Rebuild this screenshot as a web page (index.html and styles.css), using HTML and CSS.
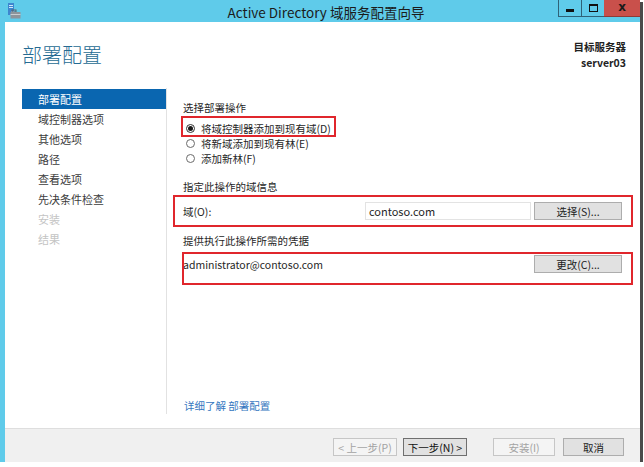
FILE: index.html
```html
<!DOCTYPE html>
<html lang="zh-CN">

<head>
  <meta charset="UTF-8" />
  <title>Active Directory 域服务配置向导</title>
  <link rel="stylesheet" href="styles.css">
</head>

<body>
  <div class="window">
    <div class="titlebar">
      <svg class="app-icon" width="14" height="16" viewBox="0 0 14 16">
        <rect x="1" y="0" width="6" height="12" fill="#3d86cf" />
        <rect x="2" y="2" width="4" height="1" fill="#cfe6fa" />
        <rect x="2" y="4" width="4" height="1" fill="#cfe6fa" />
        <rect x="4" y="8" width="3" height="1" fill="#9fd0f5" />
        <rect x="5" y="7" width="4" height="2" fill="none" stroke="#5b636b" stroke-width="1" />
        <rect x="3.5" y="9" width="10" height="6.5" fill="#8d949b" />
        <rect x="3.5" y="11" width="10" height="1" fill="#c9cdd1" />
      </svg>
      <div class="title">Active Directory 域服务配置向导</div>
      <div class="controls">
        <span class="ctl ctl-min"><i></i></span>
        <span class="ctl ctl-max"><i></i></span>
        <span class="ctl ctl-close">x</span>
      </div>
    </div>

    <div class="client">
      <div class="page">
        <div class="page-head">
          <h1>部署配置</h1>
          <div class="target">
            <div>目标服务器</div>
            <div class="target-name">server03</div>
          </div>
        </div>

        <div class="page-body">
          <ul class="steps">
            <li class="active">部署配置</li>
            <li>域控制器选项</li>
            <li>其他选项</li>
            <li>路径</li>
            <li>查看选项</li>
            <li>先决条件检查</li>
            <li class="disabled">安装</li>
            <li class="disabled">结果</li>
          </ul>

          <div class="pane">
            <div class="group-label first">选择部署操作</div>
            <div class="radios">
              <div class="radio mark mark-radio"><span class="dot checked"></span>将域控制器添加到现有域(D)</div>
              <div class="radio"><span class="dot"></span>将新域添加到现有林(E)</div>
              <div class="radio"><span class="dot"></span>添加新林(F)</div>
            </div>

            <div class="group-label">指定此操作的域信息</div>
            <div class="field-row domain-row mark mark-domain">
              <span class="field-name">域(O):</span>
              <span class="text-box">contoso.com</span>
              <span class="btn">选择(S)...</span>
            </div>

            <div class="group-label">提供执行此操作所需的凭据</div>
            <div class="field-row cred-row mark mark-cred">
              <span class="field-name">administrator@contoso.com</span>
              <span class="btn">更改(C)...</span>
            </div>

            <a class="more-link" href="#">详细了解 部署配置</a>
          </div>
        </div>
      </div>

      <div class="footer">
        <span class="btn foot-btn is-disabled">&lt; 上一步(P)</span>
        <span class="btn foot-btn is-default">下一步(N) &gt;</span>
        <span class="btn foot-btn is-disabled install">安装(I)</span>
        <span class="btn foot-btn cancel">取消</span>
      </div>
    </div>
  </div>
</body>

</html>
```

FILE: styles.css
```css
* {
  box-sizing: border-box;
}

html,
body {
  margin: 0;
  padding: 0;
  background: #fff;
  font-family: "Noto Sans CJK SC", "Noto Sans", sans-serif;
  color: #262626;
}

.window {
  width: 640px;
  height: 462px;
  display: flex;
  flex-direction: column;
  background: #5fcbea;
  box-shadow: 3px 2px 0 #4a4a4a;
}

/* title bar */

.titlebar {
  height: 22px;
  display: grid;
  grid-template-columns: 1fr auto 1fr;
  align-items: center;
  flex-shrink: 0;
}

.app-icon {
  margin-left: 7px;
  align-self: start;
  margin-top: 3px;
}

.title {
  font-size: 13.5px;
  line-height: 22px;
  color: #1b1b1b;
  padding: 1px 0 0 12px;
}

.controls {
  justify-self: end;
  align-self: start;
  display: flex;
  height: 17px;
}

.ctl {
  display: flex;
  align-items: center;
  justify-content: center;
  height: 17px;
  border-bottom: 1px solid #2f6277;
}

.ctl-min {
  width: 24px;
  border-left: 1px solid #2f6277;
  border-right: 1px solid #2f6277;
}

.ctl-min i {
  display: block;
  width: 8px;
  height: 3px;
  background: #111;
  margin-top: 5px;
}

.ctl-max {
  width: 22px;
}

.ctl-max i {
  display: block;
  width: 9px;
  height: 8px;
  border: 1px solid #111;
  border-top-width: 2px;
}

.ctl-close {
  width: 36px;
  background: #c9504b;
  border-bottom-color: #8e3a36;
  font-size: 12px;
  font-weight: bold;
  color: #1a1a1a;
  font-family: "DejaVu Sans", sans-serif;
  line-height: 1;
  padding-bottom: 2px;
}

/* client area */

.client {
  flex: 1;
  display: flex;
  flex-direction: column;
  margin-left: 5px;
  background: #fff;
}

.page {
  flex: 1;
  display: flex;
  flex-direction: column;
}

.page-head {
  display: flex;
  justify-content: space-between;
  align-items: flex-start;
  padding: 17px 14px 0 17px;
}

h1 {
  margin: 3px 0 0;
  font-size: 20px;
  line-height: 26px;
  font-weight: 300;
  color: #256b93;
}

.target {
  text-align: right;
  font-size: 10.5px;
  line-height: 15.5px;
  font-weight: bold;
  color: #222;
}

.page-body {
  flex: 1;
  display: flex;
  margin: 18px 0 14px 17px;
}

.steps {
  list-style: none;
  margin: 0;
  padding: 1px 0 0;
  width: 145px;
  border-right: 1px solid #e2e2e2;
  font-size: 11px;
}

.steps li {
  height: 20px;
  line-height: 20px;
  padding-left: 16px;
  color: #3c3c3c;
}

.steps li.active {
  background: #0a66b0;
  color: #fff;
}

.steps li.disabled {
  color: #c4c4c4;
}

.pane {
  flex: 1;
  display: flex;
  flex-direction: column;
  padding: 0 18px 0 16px;
  font-size: 10.5px;
}

.group-label {
  line-height: 16px;
  margin-top: 13px;
  color: #262626;
}

.group-label.first {
  margin-top: 12px;
}

.radios {
  margin-top: 5px;
}

.radio {
  display: flex;
  align-items: center;
  height: 15px;
  width: fit-content;
}

.dot {
  width: 9px;
  height: 9px;
  border: 1px solid #6b6b6b;
  border-radius: 50%;
  margin: 0 6px 0 3px;
  display: flex;
  align-items: center;
  justify-content: center;
  background: #fff;
}

.dot.checked {
  border-color: #333;
}

.dot.checked::after {
  content: "";
  width: 5px;
  height: 5px;
  border-radius: 50%;
  background: #1a1a1a;
}

.field-row {
  display: flex;
  align-items: center;
  height: 18px;
}

.domain-row {
  margin-top: 7px;
}

.cred-row {
  margin-top: 6px;
}

.field-name {
  flex: 1;
}

.text-box {
  width: 166px;
  height: 18px;
  line-height: 16px;
  border: 1px solid #e3e3e3;
  padding-left: 3px;
  margin-right: 3px;
  background: #fff;
  font-size: 11px;
}

.btn {
  display: flex;
  align-items: center;
  justify-content: center;
  width: 88px;
  height: 18px;
  font-size: 10.5px;
  background: #e1e1e1;
  border: 1px solid #adadad;
  color: #222;
}

/* red annotation frames */

.mark {
  position: relative;
}

.mark::after {
  content: "";
  position: absolute;
  border: 2px solid #e0262c;
  pointer-events: none;
}

.mark-radio::after {
  left: -2px;
  right: -5px;
  top: -5px;
  bottom: -1px;
}

.mark-domain::after {
  left: -10px;
  right: -11px;
  top: -7px;
  bottom: -7px;
}

.mark-cred::after {
  left: -1px;
  right: -11px;
  top: -3px;
  bottom: -12px;
}

.more-link {
  margin-top: auto;
  line-height: 16px;
  color: #3476c0;
  text-decoration: none;
  padding-left: 1px;
}

/* footer */

.footer {
  height: 34px;
  flex-shrink: 0;
  display: flex;
  justify-content: flex-end;
  align-items: flex-start;
  padding: 9px 16px 0 0;
  background: #f0f0f0;
  border-top: 1px solid #dedede;
}

.foot-btn {
  width: 64px;
}

.foot-btn + .foot-btn {
  margin-left: 6px;
}

.foot-btn.install {
  margin-left: 26px;
  width: 62px;
}

.foot-btn.cancel {
  margin-left: 8px;
  width: 61px;
}

.btn.is-disabled {
  background: #f4f4f4;
  border-color: #c6c6c6;
  color: #a3a3a3;
}

.btn.is-default {
  border-color: #6f6f6f;
  color: #111;
}
```
